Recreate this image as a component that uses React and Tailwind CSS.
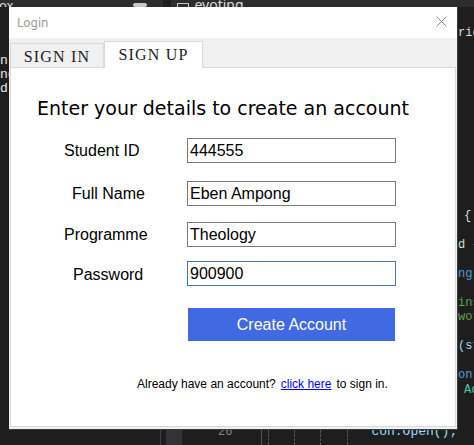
import React from 'react';

const fields = [
  { label: 'Student ID', value: '444555', pad: 'pl-[53px]', gap: 'mt-[19px]' },
  { label: 'Full Name', value: 'Eben Ampong', pad: 'pl-[61px]', gap: 'mt-[18px]' },
  { label: 'Programme', value: 'Theology', pad: 'pl-[53px]', gap: 'mt-[16px]' },
  { label: 'Password', value: '900900', pad: 'pl-[62px]', gap: 'mt-[14px]', focused: true },
];

// code lines visible to the right of the dialog
const rightLines = [
  { text: '{', color: 'text-[#dcdcdc]', indent: 'pl-[6px]' },
  { text: '' },
  { text: 'd {', color: 'text-[#dcdcdc]' },
  { text: '' },
  { text: 'ng', color: 'text-[#569cd6]' },
  { text: '' },
  { text: 'ins', color: 'text-[#57a64a]' },
  { text: 'wor', color: 'text-[#57a64a]' },
  { text: '' },
  { text: '(st', color: 'text-[#9cdcfe]' },
  { text: '' },
  { text: 'on', color: 'text-[#569cd6]' },
  { text: 'Ac', color: 'text-[#4ec9b0]', indent: 'pl-[6px]' },
];

// the code editor that the dialog sits over
const EditorBackdrop = () => (
  <div className="flex h-full flex-col font-['Liberation_Mono',monospace] text-[12px] leading-none text-[#dcdcdc]">
    <div className="flex h-[7px] shrink-0 items-end overflow-hidden whitespace-nowrap bg-[#2d2d30]">
      <span className="ml-[-1px] translate-y-[5px] font-['Noto_Sans',sans-serif] text-[13px]">ox</span>
      <span className="ml-[120px] h-[4px] w-[14px] rounded-sm bg-[#c8c8c8]" />
      <span className="ml-[16px] h-full w-[8px] bg-[#1e1e1e]" />
      <span className="ml-[6px] h-[4px] w-[12px] border border-b-0 border-[#c8c8c8]" />
      <span className="ml-[5px] translate-y-[5px] font-['Noto_Sans',sans-serif] text-[14px]">evoting</span>
    </div>

    <div className="flex flex-1 justify-between overflow-hidden">
      <div className="flex w-[9px] flex-col overflow-hidden pt-[47px] text-[13px] leading-[14px] text-[#e8e8e8]">
        <span>n</span>
        <span>ng</span>
        <span>d</span>
      </div>
      <div className="flex w-[16px] flex-col overflow-hidden whitespace-nowrap pt-[19px] leading-[14.5px]">
        <span>ric</span>
        <div className="mt-[168px] flex flex-col">
          {rightLines.map((l, i) => (
            <span key={i} className={`h-[14.5px] ${l.color || ''} ${l.indent || ''}`}>
              {l.text}
            </span>
          ))}
        </div>
      </div>
    </div>

    <div className="flex h-[15px] shrink-0 items-stretch whitespace-nowrap">
      <span className="ml-[160px] w-px bg-[#3f3f46]" />
      <span className="ml-[5px] w-[16px] bg-[#333337]" />
      <span className="ml-[36px] -translate-y-[4px] text-[#858585]">26</span>
      <span className="ml-[29px] w-px bg-[#555]" />
      <span className="ml-[6px] border-l border-dashed border-[#555]" />
      <span className="ml-[25px] border-l border-dashed border-[#555]" />
      <span className="ml-[25px] border-l border-dashed border-[#555]" />
      <span className="ml-[26px] border-l border-dashed border-[#555]" />
      <span className="ml-[23px] -translate-y-[5px] text-[13px] text-[#9cdcfe]">con.Open();</span>
    </div>
  </div>
);

export default function App() {
  return (
    <div className="relative h-[445px] w-[474px] overflow-hidden bg-[#1e1e1e]">
      <EditorBackdrop />

      {/* Login dialog, a window floating over the editor */}
      <div className="absolute left-[9px] top-[7px] flex h-[423px] w-[449px] flex-col border-r border-b border-[#3c3c3c] bg-[#f0f0f0]">
        <div className="flex h-[31px] shrink-0 items-center justify-between bg-white pl-[8px] pr-[10px]">
          <span className="mt-[1px] font-['Noto_Sans',sans-serif] text-[12px] text-[#9a9a9a]">Login</span>
          <svg width="11" height="11" viewBox="0 0 11 11" className="mt-[-2px]">
            <path d="M0.5 0.5 L10.5 10.5 M10.5 0.5 L0.5 10.5" stroke="#8a8a8a" strokeWidth="1" fill="none" />
          </svg>
        </div>

        <div className="flex h-[29px] shrink-0 items-end pl-px font-['Liberation_Serif',serif] text-[16px] tracking-[1.2px] text-[#222]">
          <div className="flex h-[24px] w-[94px] items-center justify-center border border-b-0 border-[#d9d9d9] bg-[#f0f0f0] pt-[2px]">
            SIGN IN
          </div>
          <div className="relative z-10 -mb-px flex h-[27px] w-[99px] items-center justify-center border border-b-0 border-[#d9d9d9] bg-white pb-[1px]">
            SIGN UP
          </div>
        </div>

        <div className="ml-px h-[360px] w-[446px] border border-[#d9d9d9] bg-white">
          <h1 className="ml-[26px] mt-[29px] font-['DejaVu_Sans',sans-serif] text-[19px] leading-[22px] text-black">
            Enter your details to create an account
          </h1>

          <div className="font-['Liberation_Sans',Arial,sans-serif] text-[16px] text-black">
            {fields.map((f) => (
              <div key={f.label} className={`flex h-[25px] items-center ${f.gap}`}>
                <div className={`w-[176px] ${f.pad} ${f.focused ? 'pt-[3px]' : 'pt-[1px]'}`}>{f.label}</div>
                <div
                  className={`flex h-[25px] w-[209px] items-center border pl-[2px] ${
                    f.focused ? 'border-[#4a78a8]' : 'border-[#7a7a7a]'
                  }`}
                >
                  {f.value}
                </div>
              </div>
            ))}

            <button className="ml-[177px] mt-[22px] flex h-[33px] w-[207px] items-center justify-center bg-[#4169e1] text-white">
              Create Account
            </button>
          </div>

          <p className="ml-[126px] mt-[36px] flex gap-[5px] font-['Liberation_Sans',Arial,sans-serif] text-[12px] leading-[14px] text-black">
            <span>Already have an account?</span>
            <a className="text-[#0000ff] underline">click here</a>
            <span>to sign in.</span>
          </p>
        </div>
      </div>
    </div>
  );
}
